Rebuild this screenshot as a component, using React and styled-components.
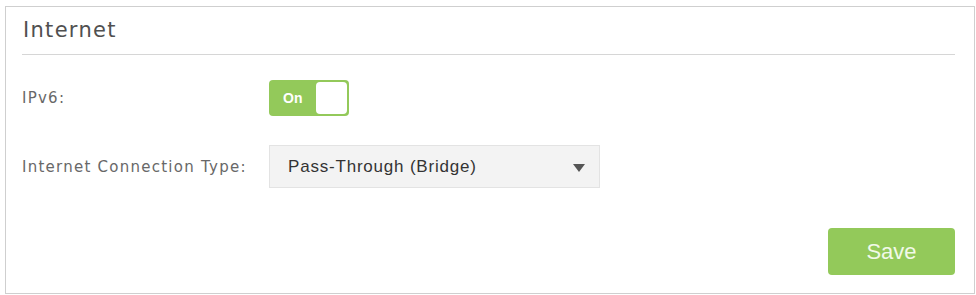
import React, { useState } from "react";
import styled, { createGlobalStyle } from "styled-components";

const Global = createGlobalStyle`
  html, body { margin: 0; padding: 0; background: #fff; }
  body { font-family: "DejaVu Sans", Verdana, sans-serif; }
`;

const Page = styled.div`
  padding: 6px 2px 2px 5px;
  width: 976px;
  height: 295px;
  box-sizing: border-box;
`;

const Panel = styled.section`
  width: 970px;
  height: 288px;
  box-sizing: border-box;
  border: 1px solid #cfcfcf;
  padding: 0 19px 0 16px;
  display: flex;
  flex-direction: column;
`;

const Title = styled.h2`
  margin: 0;
  font-weight: normal;
  font-size: 21px;
  letter-spacing: 1.3px;
  color: #505050;
  height: 47px;
  line-height: 46px;
  border-bottom: 1px solid #d6d6d6;
  padding-left: 1px;
`;

const Row = styled.div`
  display: flex;
  align-items: center;
  height: ${(p) => p.$h}px;
  margin-top: ${(p) => p.$mt}px;
`;

const Label = styled.span`
  width: 247px;
  font-size: 15px;
  letter-spacing: 1.25px;
  color: #686868;
`;

const Toggle = styled.button`
  display: flex;
  align-items: center;
  width: 80px;
  height: 36px;
  padding: 2px;
  border: none;
  border-radius: 4px;
  background: #93c95a;
  box-sizing: border-box;
  cursor: pointer;
`;

const ToggleText = styled.span`
  flex: 1;
  color: #fff;
  font-family: "Liberation Sans", Arial, sans-serif;
  font-weight: bold;
  font-size: 14px;
  text-align: left;
  padding-left: 12px;
`;

const Knob = styled.span`
  width: 31px;
  height: 32px;
  background: #fff;
  border-radius: 4px;
`;

const Select = styled.div`
  display: flex;
  align-items: center;
  justify-content: space-between;
  width: 331px;
  height: 43px;
  box-sizing: border-box;
  background: #f3f3f3;
  border: 1px solid #e3e3e3;
  padding: 0 14px 0 18px;
  font-family: "Liberation Sans", Arial, sans-serif;
  font-size: 17px;
  letter-spacing: 0.8px;
  color: #333;
`;

const Arrow = styled.span`
  width: 0;
  height: 0;
  border-left: 6px solid transparent;
  border-right: 6px solid transparent;
  border-top: 8px solid #555;
  margin-top: 2px;
`;

const Footer = styled.div`
  display: flex;
  justify-content: flex-end;
  margin-top: 40px;
`;

const SaveButton = styled.button`
  width: 127px;
  height: 47px;
  border: none;
  border-radius: 4px;
  background: #93c95a;
  color: #f1f9e8;
  font-family: "Liberation Sans", Arial, sans-serif;
  font-size: 22px;
  cursor: pointer;
`;

export default function App() {
  const [on, setOn] = useState(true);
  return (
    <>
      <Global />
      <Page>
        <Panel>
          <Title>Internet</Title>
          <Row $h={36} $mt={25}>
            <Label>IPv6:</Label>
            <Toggle onClick={() => setOn(!on)}>
              <ToggleText>On</ToggleText>
              <Knob />
            </Toggle>
          </Row>
          <Row $h={43} $mt={29}>
            <Label>Internet Connection Type:</Label>
            <Select>
              <span>Pass-Through (Bridge)</span>
              <Arrow />
            </Select>
          </Row>
          <Footer>
            <SaveButton>Save</SaveButton>
          </Footer>
        </Panel>
      </Page>
    </>
  );
}
